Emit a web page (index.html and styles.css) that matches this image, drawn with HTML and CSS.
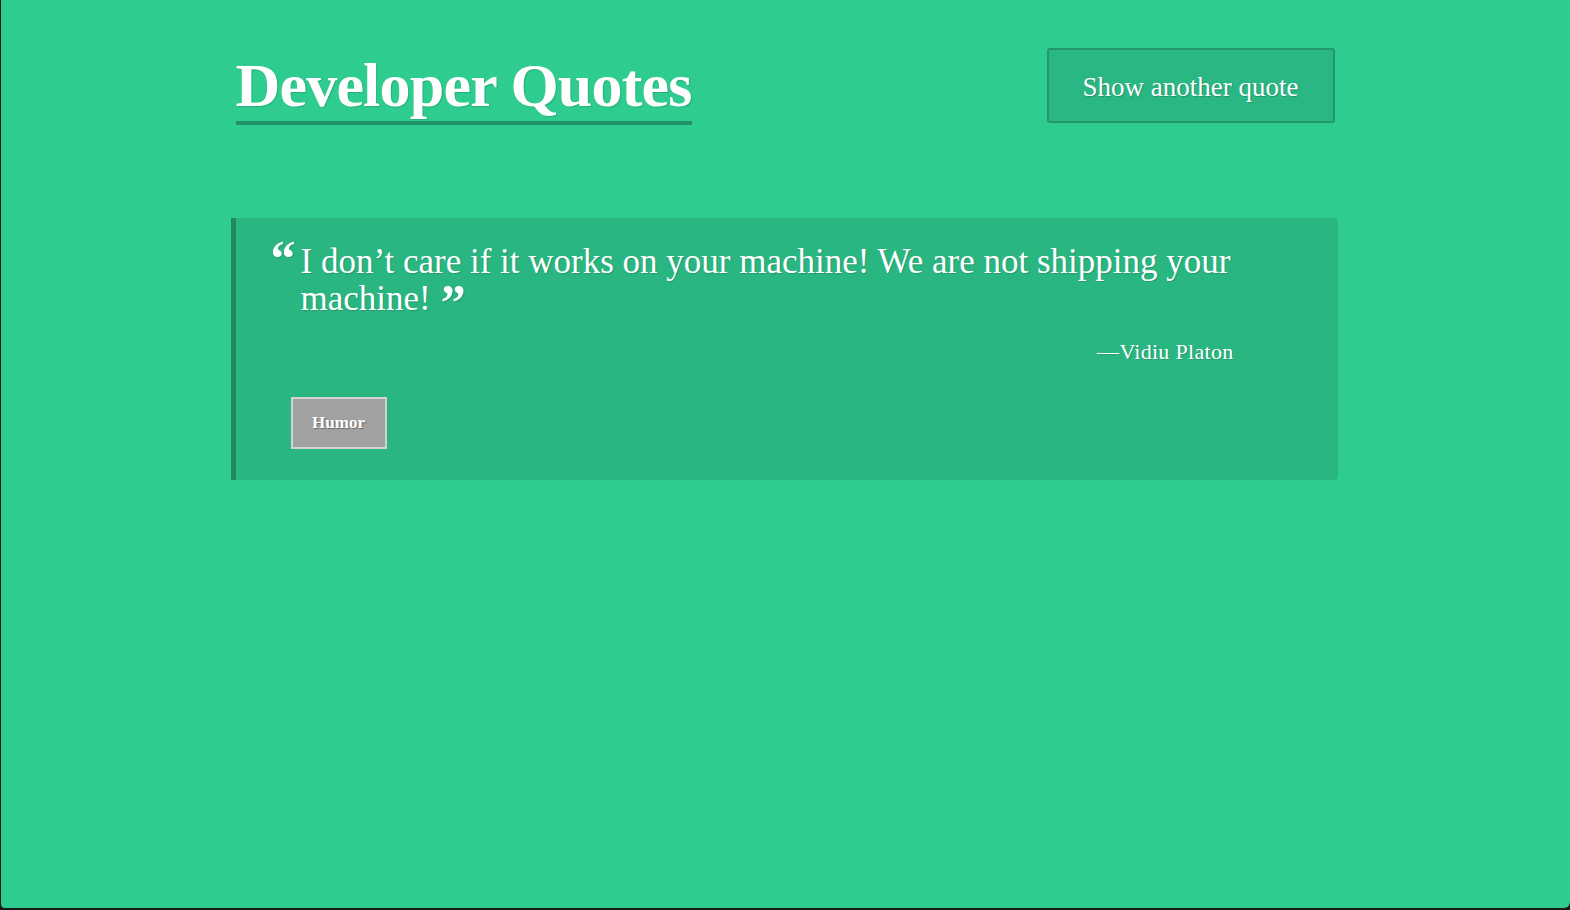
FILE: index.html
```html
<!DOCTYPE html>
<html lang="en">
<head>
<meta charset="utf-8">
<title>Developer Quotes</title>
<link rel="stylesheet" href="styles.css">
</head>
<body>
<div class="frame">
  <div class="container">
    <header class="header">
      <h1 class="title">Developer Quotes</h1>
      <button class="btn">Show another quote</button>
    </header>
    <blockquote class="card">
      <p class="quote"><span class="text">I don’t care if it works on your machine! We are not shipping your machine!</span></p>
      <p class="author">—Vidiu Platon</p>
      <div class="tags"><span class="tag">Humor</span></div>
    </blockquote>
  </div>
</div>
</body>
</html>
```
FILE: styles.css
```css
html, body {
  margin: 0;
  padding: 0;
  height: 100%;
  background: #1a1a1a;
}
body {
  font-family: "Liberation Serif", "DejaVu Serif", serif;
  color: #fff;
}
.frame {
  height: 908px;
  margin-left: 1px;
  background: #2ecc8e;
  border-bottom-left-radius: 4px;
  border-bottom-right-radius: 6px;
  overflow: hidden;
}
.container {
  width: 1100px;
  margin: 0 auto;
  padding-top: 48px;
}
.header {
  display: flex;
  justify-content: space-between;
  align-items: flex-start;
}
.title {
  margin: 0;
  margin-top: 6px;
  font-size: 62px;
  font-weight: bold;
  line-height: 62px;
  padding-bottom: 5px;
  border-bottom: 4px solid #22916a;
  text-shadow: 1px 1px 1px rgba(0,0,0,0.15);
  letter-spacing: -0.8px;
}
.btn {
  font-family: inherit;
  font-size: 27px;
  color: #fff;
  background: #2ab783;
  border: 2px solid #22976c;
  border-radius: 3px;
  width: 288px;
  height: 75px;
  padding: 4px 0 0;
  text-shadow: 1px 1px 1px rgba(0,0,0,0.2);
  cursor: pointer;
  margin-right: 1px;
}
.card {
  margin: 93px -2px 0 -5px;
  background: #29b681;
  border-left: 5px solid #1e8a5e;
  border-radius: 0 4px 4px 0;
  padding: 25px 92px 31px 35px;
}
.quote {
  margin: 0;
  padding-left: 30px;
  position: relative;
  font-size: 35px;
  line-height: 37px;
  text-shadow: 1px 1px 1px rgba(0,0,0,0.15);
}
.quote::before {
  content: "\201C";
  position: absolute;
  left: 0;
  top: 15px;
  font-weight: bold;
  font-size: 50px;
  line-height: 0;
}
.text::after {
  content: "\201D";
  position: relative;
  top: 9px;
  margin-left: 10px;
  font-weight: bold;
  font-size: 50px;
  line-height: 0;
}
.author {
  margin: 22px 12px 0 0;
  text-align: right;
  font-size: 22px;
  letter-spacing: 0.3px;
  text-shadow: 1px 1px 1px rgba(0,0,0,0.15);
}
.tags {
  margin-top: 32px;
  padding-left: 20px;
}
.tag {
  display: inline-block;
  width: 92px;
  height: 48px;
  line-height: 48px;
  text-align: center;
  background: #a1a1a1;
  border: 2px solid #d2d2d2;
  font-weight: bold;
  font-size: 17px;
  text-shadow: 1px 1px 1px rgba(0,0,0,0.35);
}
```
